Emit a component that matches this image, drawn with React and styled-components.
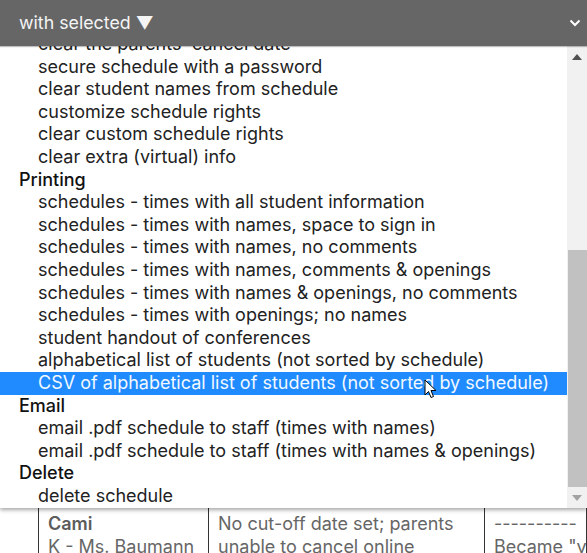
import React from "react";
import styled, { createGlobalStyle } from "styled-components";

const Global = createGlobalStyle`
  html, body { margin: 0; padding: 0; background: #fff; }
  body { width: 587px; height: 553px; overflow: hidden; font-family: Inter, "Noto Sans", sans-serif; }
`;

const Page = styled.div`
  width: 587px;
  height: 553px;
  display: flex;
  flex-direction: column;
  overflow: hidden;
  position: relative;
`;

const Bar = styled.div`
  height: 46px;
  flex: none;
  background: #666666;
  display: flex;
  align-items: center;
  justify-content: space-between;
  padding: 0 6px 0 19px;
  box-sizing: border-box;
  position: relative;
  z-index: 2;
  box-shadow: 0 1px 1px rgba(0,0,0,0.25);
`;

const BarLabel = styled.span`
  color: #f4f4f4;
  font-family: Inter, sans-serif;
  font-size: 17.8px;
  padding-bottom: 2px;
`;

const Menu = styled.div`
  height: 462px;
  flex: none;
  display: flex;
  background: #fff;
  position: relative;
  z-index: 1;
  box-shadow: 0 2px 4px rgba(0,0,0,0.35);
`;

const ListViewport = styled.div`
  flex: 1;
  overflow: hidden;
`;

const List = styled.ul`
  list-style: none;
  margin: ${p => p.$offset}px 0 0;
  padding: 0;
  font-family: Inter, sans-serif;
  font-size: 18px;
  line-height: 22.6px;
`;

const Group = styled.li`
  padding-left: 19px;
  color: #111;
  font-weight: 500;
`;

const Option = styled.li`
  padding-left: 38px;
  color: ${p => (p.$selected ? "#f2f8ff" : "#222")};
  background: ${p => (p.$selected ? "#1f8bff" : "transparent")};
  white-space: nowrap;
`;

const Scrollbar = styled.div`
  width: 20px;
  flex: none;
  background: #f1f1f1;
  display: flex;
  flex-direction: column;
  align-items: center;
`;

const ArrowBtn = styled.div`
  height: 22px;
  flex: none;
  display: flex;
  align-items: center;
  justify-content: center;
  width: 100%;
`;

const Track = styled.div`
  flex: 1;
  width: 100%;
  display: flex;
  flex-direction: column;
`;

const Thumb = styled.div`
  margin-top: ${p => p.$top}px;
  height: ${p => p.$height}px;
  width: 19px;
  margin-left: 1px;
  background: #c1c1c1;
`;

const Table = styled.div`
  display: grid;
  grid-template-columns: 170px 276px 1fr;
  margin-left: 38px;
  border-left: 1px solid #333;
  font-family: Inter, sans-serif;
  font-size: 18px;
  line-height: 23px;
  color: #666;
`;

const Cell = styled.div`
  padding: 4px 8px 0 9px;
  border-right: 1px solid #333;
  white-space: nowrap;
  overflow: hidden;
`;

const Name = styled.div`
  font-weight: 600;
  color: #5c5c5c;
`;

const Cursor = styled.svg`
  position: absolute;
  left: 424px;
  top: 379px;
  z-index: 5;
`;

const items = [
  { t: "clear the parents' cancel date" },
  { t: "secure schedule with a password" },
  { t: "clear student names from schedule" },
  { t: "customize schedule rights" },
  { t: "clear custom schedule rights" },
  { t: "clear extra (virtual) info" },
  { g: "Printing" },
  { t: "schedules - times with all student information" },
  { t: "schedules - times with names, space to sign in" },
  { t: "schedules - times with names, no comments" },
  { t: "schedules - times with names, comments & openings" },
  { t: "schedules - times with names & openings, no comments" },
  { t: "schedules - times with openings; no names" },
  { t: "student handout of conferences" },
  { t: "alphabetical list of students (not sorted by schedule)" },
  { t: "CSV of alphabetical list of students (not sorted by schedule)", s: true },
  { g: "Email" },
  { t: "email .pdf schedule to staff (times with names)" },
  { t: "email .pdf schedule to staff (times with names & openings)" },
  { g: "Delete" },
  { t: "delete schedule" },
];

export default function App() {
  return (
    <Page>
      <Global />
      <Bar>
        <BarLabel>with selected ▼</BarLabel>
        <svg width="12" height="8" viewBox="0 0 12 8">
          <polyline points="1.5,1.5 6,6 10.5,1.5" fill="none" stroke="#fff" strokeWidth="2" />
        </svg>
      </Bar>
      <Menu>
        <ListViewport>
          <List $offset={-13}>
            {items.map((it, i) =>
              it.g ? (
                <Group key={i}>{it.g}</Group>
              ) : (
                <Option key={i} $selected={it.s}>{it.t}</Option>
              )
            )}
          </List>
        </ListViewport>
        <Scrollbar>
          <ArrowBtn>
            <svg width="10" height="6" viewBox="0 0 10 6"><polygon points="5,0 10,6 0,6" fill="#505050" /></svg>
          </ArrowBtn>
          <Track>
            <Thumb $top={182} $height={237} />
          </Track>
          <ArrowBtn>
            <svg width="10" height="6" viewBox="0 0 10 6"><polygon points="0,0 10,0 5,6" fill="#a3a3a3" /></svg>
          </ArrowBtn>
        </Scrollbar>
      </Menu>
      <Table>
        <Cell>
          <Name>Cami</Name>
          <div>K - Ms. Baumann</div>
        </Cell>
        <Cell>
          <div>No cut-off date set; parents</div>
          <div>unable to cancel online</div>
        </Cell>
        <Cell>
          <div>----------</div>
          <div>Became "virtual"</div>
        </Cell>
      </Table>
      <Cursor width="13" height="20" viewBox="0 0 13 20">
        <path d="M1 1 L1 16 L4.5 12.5 L7 18.5 L9.5 17.5 L7 11.5 L12 11.5 Z" fill="#fff" stroke="#000" strokeWidth="1" strokeLinejoin="round" />
      </Cursor>
    </Page>
  );
}
